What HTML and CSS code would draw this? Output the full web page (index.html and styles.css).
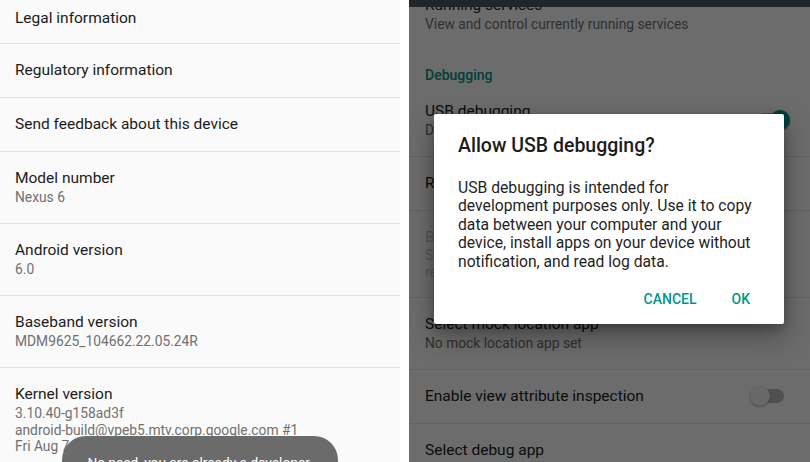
FILE: index.html
```html
<!DOCTYPE html>
<html lang="en">
<head>
<meta charset="utf-8">
<title>Developer options</title>
<link rel="stylesheet" href="styles.css">
</head>
<body>
<div class="screen">
  <section class="phone phone-left">
    <ul class="list list-left">
      <li class="row row-first"><div class="title">Legal information</div></li>
      <li class="row"><div class="title">Regulatory information</div></li>
      <li class="row"><div class="title">Send feedback about this device</div></li>
      <li class="row"><div class="title">Model number</div><div class="summary">Nexus 6</div></li>
      <li class="row"><div class="title">Android version</div><div class="summary">6.0</div></li>
      <li class="row"><div class="title">Baseband version</div><div class="summary">MDM9625_104662.22.05.24R</div></li>
      <li class="row row-last"><div class="title">Kernel version</div><div class="summary summary-multi">3.10.40-g158ad3f<br>android-build@vpeb5.mtv.corp.google.com #1<br>Fri Aug 7 17:58:13 UTC 2015</div></li>
    </ul>
    <div class="toast">No need, you are already a developer.</div>
  </section>

  <section class="phone phone-right">
    <ul class="list list-right">
      <li class="row row-plain"><div class="title">Running services</div><div class="summary">View and control currently running services</div></li>
      <li class="category">Debugging</li>
      <li class="row row-switch"><div class="row-text"><div class="title">USB debugging</div><div class="summary">Debug mode when USB is connected</div></div><span class="switch switch-on"><span class="thumb"></span></span></li>
      <li class="row"><div class="title">Revoke USB debugging authorizations</div></li>
      <li class="row row-disabled"><div class="title">Bug report shortcut</div><div class="summary">Show a button in the power menu for taking a<br>report</div></li>
      <li class="row"><div class="title">Select mock location app</div><div class="summary">No mock location app set</div></li>
      <li class="row row-switch"><div class="row-text"><div class="title">Enable view attribute inspection</div></div><span class="switch switch-off"><span class="thumb"></span></span></li>
      <li class="row row-last"><div class="title">Select debug app</div></li>
    </ul>
    <div class="appbar"></div>
    <div class="scrim"></div>
    <div class="dialog" role="dialog">
      <h2 class="dialog-title">Allow USB debugging?</h2>
      <p class="dialog-body">USB debugging is intended for<br>development purposes only. Use it to copy<br>data between your computer and your<br>device, install apps on your device without<br>notification, and read log data.</p>
      <div class="dialog-actions">
        <span class="btn">CANCEL</span>
        <span class="btn">OK</span>
      </div>
    </div>
  </section>
</div>
</body>
</html>
```

FILE: styles.css
```css
* { box-sizing: border-box; }

html, body {
  margin: 0;
  padding: 0;
  background: #ffffff;
}

body {
  font-family: Roboto, "Noto Sans", "Liberation Sans", sans-serif;
  width: 810px;
  height: 462px;
  overflow: hidden;
}

.screen {
  display: flex;
  gap: 9px;
  width: 810px;
  height: 462px;
}

.phone {
  position: relative;
  height: 462px;
  overflow: hidden;
  background: #fafafa;
}

.phone-left { width: 400px; }
.phone-right { flex: 1; }

.list {
  list-style: none;
  margin: 0;
  padding: 0;
}

.list-left { margin-top: -10px; }
.list-right { margin-top: -21px; }

.row {
  padding: 16px 16px 17px 15px;
  border-bottom: 1px solid #e2e2e2;
}

.row-first { padding-top: 18px; padding-bottom: 15px; }

.list-right .row { padding-left: 16px; }

.row-plain { border-bottom: none; padding-bottom: 16px; }
.row-last { border-bottom: none; }

.title {
  font-size: 15.5px;
  line-height: 20px;
  color: #1c1c1c;
  white-space: nowrap;
}

.summary {
  font-size: 13.8px;
  line-height: 18px;
  color: #707070;
  white-space: nowrap;
}

.summary-multi { line-height: 16.5px; margin-top: 1px; }

.category {
  padding: 16px 16px 0;
  font-size: 14px;
  line-height: 20px;
  font-weight: 500;
  color: #009688;
}

.row-switch {
  display: flex;
  align-items: center;
  justify-content: space-between;
}

.list-right .row-switch:last-of-type { padding-top: 18px; }

.row-disabled { padding-bottom: 16px; }
.row-disabled .title,
.row-disabled .summary { color: #c4c4c4; }
.row-disabled .summary { line-height: 17px; }

.switch {
  position: relative;
  display: inline-block;
  width: 34px;
  height: 20px;
  margin-right: 10px;
  flex: none;
}

.switch::before {
  content: "";
  position: absolute;
  left: 7px;
  right: 0;
  top: 3px;
  height: 14px;
  border-radius: 7px;
}

.switch-off::before { background: #b9b9b9; }
.switch-on::before { background: #80cbc4; }

.thumb {
  position: absolute;
  top: 0;
  width: 20px;
  height: 20px;
  border-radius: 50%;
  box-shadow: 0 1px 2px rgba(0, 0, 0, 0.35);
}

.switch-off .thumb { left: 0; background: #f1f1f1; }
.switch-on .thumb { right: -6px; background: #009688; }

.appbar {
  position: absolute;
  left: 0;
  top: 0;
  width: 100%;
  height: 7px;
  background: #4a5960;
}

.scrim {
  position: absolute;
  inset: 0;
  background: rgba(0, 0, 0, 0.57);
}

.dialog {
  position: absolute;
  left: 25px;
  top: 114px;
  width: 350px;
  height: 210px;
  background: #ffffff;
  border-radius: 2px;
  box-shadow: 0 12px 28px rgba(0, 0, 0, 0.35), 0 4px 10px rgba(0, 0, 0, 0.2);
  padding: 20px 24px 0;
}

.dialog-title {
  margin: 0;
  font-size: 19.5px;
  line-height: 24px;
  font-weight: 500;
  color: #1c1c1c;
}

.dialog-body {
  margin: 21px 0 0;
  font-size: 15.7px;
  line-height: 18.4px;
  color: #1f1f1f;
}

.dialog-actions {
  display: flex;
  justify-content: flex-end;
  gap: 35px;
  margin-top: 20px;
  padding-right: 10px;
}

.btn {
  font-size: 14px;
  line-height: 16px;
  font-weight: 500;
  color: #009688;
}

.toast {
  position: absolute;
  left: 62px;
  top: 436px;
  width: 276px;
  height: 60px;
  border-radius: 24px;
  background: #6b6b6b;
  color: #ffffff;
  font-size: 13.7px;
  line-height: 20px;
  text-align: center;
  padding-top: 16px;
}
```
